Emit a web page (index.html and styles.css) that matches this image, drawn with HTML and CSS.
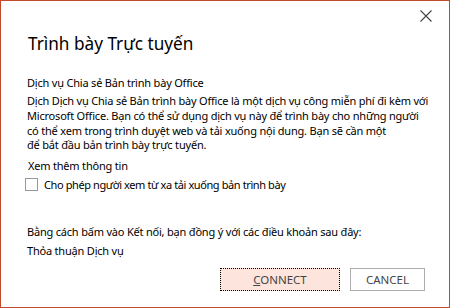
FILE: index.html
```html
<!DOCTYPE html>
<html lang="vi">
<head>
    <meta charset="UTF-8">
    <title>Trình bày Trực tuyến</title>
    <link rel="stylesheet" href="styles.css">
</head>
<body>

<div class="dialog">
    <div class="title-bar">
        <button class="close-btn" title="Đóng">
            <svg width="12" height="12" viewBox="0 0 12 12">
                <path d="M0.5 0.5 L11.5 11.5 M11.5 0.5 L0.5 11.5" stroke="#444" stroke-width="1.1" fill="none"/>
            </svg>
        </button>
    </div>

    <h1 class="dialog-title">Trình bày Trực tuyến</h1>

    <div class="content">
        <p class="service-name">Dịch vụ Chia sẻ Bản trình bày Office</p>
        <p class="service-desc">Dịch Dịch vụ Chia sẻ Bản trình bày Office là một dịch vụ công miễn phí đi kèm với<br>Microsoft Office. Bạn có thể sử dụng dịch vụ này để trình bày cho những người<br>có thể xem trong trình duyệt web và tải xuống nội dung. Bạn sẽ cần một<br>để bắt đầu bản trình bày trực tuyến.</p>
        <a class="more-link">Xem thêm thông tin</a>
        <label class="check-row">
            <span class="check-box"></span>
            Cho phép người xem từ xa tải xuống bản trình bày
        </label>

        <p class="terms">Bằng cách bấm vào Kết nối, bạn đồng ý với các điều khoản sau đây:</p>
        <a class="terms-link">Thỏa thuận Dịch vụ</a>
    </div>

    <div class="actions">
        <button class="btn btn-primary"><u>C</u>ONNECT</button>
        <button class="btn">CANCEL</button>
    </div>
</div>

</body>
</html>
```

FILE: styles.css
```css
* {
    margin: 0;
    padding: 0;
    box-sizing: border-box;
    font-family: "Segoe UI", "Noto Sans", sans-serif;
}

body {
    background: white;
    color: #000;
}

.dialog {
    width: 450px;
    height: 308px;
    border: 1px solid #c24a2b;
    background: white;
    display: flex;
    flex-direction: column;
}

.title-bar {
    display: flex;
    justify-content: flex-end;
    height: 30px;
    padding: 9px 17px 0 0;
}

.close-btn {
    width: 12px;
    height: 12px;
    border: none;
    background: none;
    display: flex;
}

.dialog-title {
    font-size: 17.2px;
    font-weight: normal;
    padding-left: 27px;
    line-height: 26px;
}

.content {
    padding-left: 26px;
    margin-top: 18px;
    font-size: 11px;
    letter-spacing: -0.2px;
    line-height: 15px;
    display: flex;
    flex-direction: column;
    align-items: flex-start;
}

.service-desc {
    margin-top: 4px;
    line-height: 14.8px;
    white-space: nowrap;
}

.more-link {
    margin-top: 5px;
    padding-left: 1px;
}

.check-row {
    display: flex;
    align-items: center;
    gap: 6px;
    margin-top: 5px;
    margin-left: -2px;
    line-height: 13px;
    letter-spacing: -0.4px;
}

.check-box {
    width: 13px;
    height: 13px;
    border: 1px solid #999;
    background: white;
}

.terms {
    margin-top: 33px;
}

.terms-link {
    margin-top: 4px;
}

.actions {
    display: flex;
    justify-content: flex-end;
    gap: 10px;
    padding-right: 24px;
    margin-top: 10px;
}

.btn {
    height: 23px;
    padding: 0 14px;
    min-width: 75px;
    font-size: 11.5px;
    color: #444;
    background: white;
    border: 1px solid #adadad;
}

.btn-primary {
    width: 120px;
    background: #fde4dc;
    border: 1px dotted #000;
}

.btn u {
    text-decoration: underline;
}
```
